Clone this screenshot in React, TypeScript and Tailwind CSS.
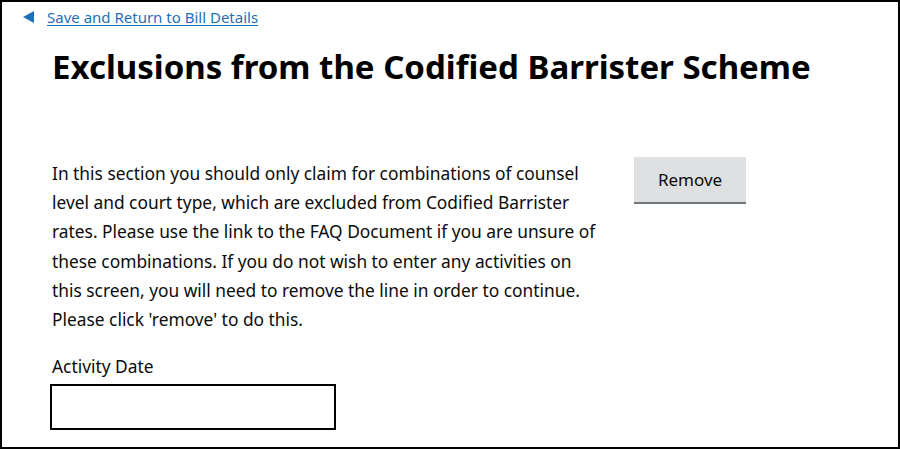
import React from "react";

export default function App() {
  return (
    <div
      className="w-[900px] h-[449px] bg-white border-2 border-black overflow-hidden text-[#0b0c0c]"
      style={{ fontFamily: '"Noto Sans", Arial, sans-serif' }}
    >
      <div className="flex items-center gap-[13px] pl-[21px] pt-[5px]">
        <span className="w-0 h-0 border-y-[6px] border-y-transparent border-r-[11px] border-r-[#1d70b8]" />
        <a href="#" className="text-[15px] leading-[20px] text-[#1d70b8] underline underline-offset-2">
          Save and Return to Bill Details
        </a>
      </div>
      <h1 className="pl-[50px] pt-[20px] text-[33px] leading-[40px] font-bold text-black">
        Exclusions from the Codified Barrister Scheme
      </h1>
      <div className="flex pl-[50px] pt-[72px]">
        <p className="w-[548px] shrink-0 text-[17.35px] leading-[29.2px]">
          In this section you should only claim for combinations of counsel level and court type, which are excluded from Codified Barrister rates. Please use the link to the FAQ Document if you are unsure of these combinations. If you do not wish to enter any activities on this screen, you will need to remove the line in order to continue. Please click 'remove' to do this.
        </p>
        <div className="pl-[34px] -mt-[2px]">
          <button className="w-[112px] h-[47px] bg-[#dee0e2] border-b-2 border-[#6f777b] text-[17px]">
            Remove
          </button>
        </div>
      </div>
      <div className="pl-[50px] pt-[20px] text-[17.35px] leading-[24px]">Activity Date</div>
      <div className="pl-[48px] pt-[6px]">
        <div className="w-[286px] h-[46px] border-2 border-black" />
      </div>
    </div>
  );
}
